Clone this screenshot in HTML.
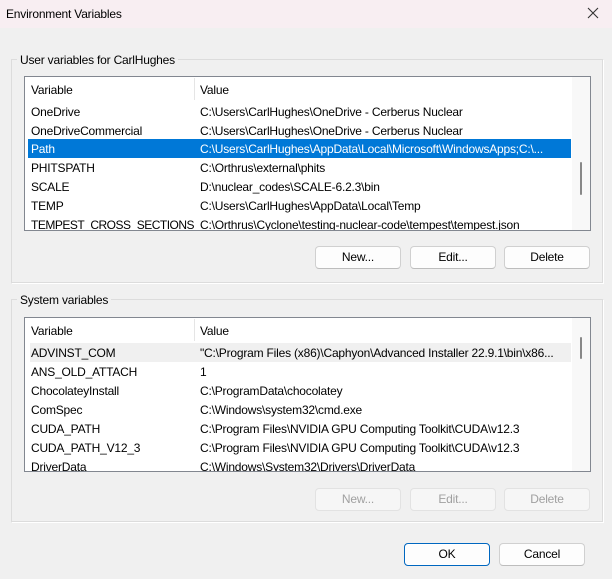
<!DOCTYPE html><html><head><style>
*{box-sizing:border-box;margin:0;padding:0}
body{width:612px;height:579px;background:#f0f0f0;font-family:"Liberation Sans",sans-serif;font-size:12px;letter-spacing:-0.2px;color:#000;position:relative;overflow:hidden}
.a{position:absolute;white-space:nowrap}
.title{left:0;top:0;width:612px;height:28px;background:#f8eef2}
.grp{border:1px solid #dcdcdc;border-right-color:#fff;border-bottom-color:#fff;box-shadow:inset -1px -1px 0 #dcdcdc}
.lbl{background:#f0f0f0;padding:0 3px}
.list{background:#fff;border:1px solid #828790;overflow:hidden}
.row{position:absolute;left:5px;height:19px;line-height:19px;width:541px}
.row span{position:absolute;top:1px}
.btn{position:absolute;height:23px;border:1px solid #d0d0d0;border-bottom-color:#bdbdbd;border-radius:4px;background:#fdfdfd;text-align:center;line-height:21px}
.dis{color:#a0a0a0;background:#f6f6f6;border-color:#e2e2e2}
.sb{position:absolute;right:0;top:0;width:18px;height:100%;background:#f8f8f8}
.th{position:absolute;left:8px;width:2px;background:#888;border-radius:1px}
</style></head><body>
<div class="a title"></div>
<div class="a" style="left:6px;top:7px">Environment Variables</div>
<svg class="a" style="left:587px;top:7px" width="12" height="12"><path d="M1 1L11 11M11 1L1 11" stroke="#333" stroke-width="1.1"/></svg>

<div class="a grp" style="left:11px;top:59px;width:593px;height:225px"></div>
<div class="a lbl" style="left:17px;top:53px">User variables for CarlHughes</div>
<div class="a list" style="left:24px;top:76px;width:567px;height:155px">
 <div class="a" style="left:169px;top:1px;width:1px;height:22px;background:#e5e5e5"></div>
 <div class="row" style="top:3px"><span style="left:1px">Variable</span><span style="left:170px">Value</span></div>
 <div class="row" style="top:25px"><span style="left:1px">OneDrive</span><span style="left:170px">C:\Users\CarlHughes\OneDrive - Cerberus Nuclear</span></div>
 <div class="row" style="top:44px"><span style="left:1px">OneDriveCommercial</span><span style="left:170px">C:\Users\CarlHughes\OneDrive - Cerberus Nuclear</span></div>
 <div class="row" style="top:62px;left:3px;background:#0078d7;color:#fff;width:543px"><span style="left:3px">Path</span><span style="left:172px">C:\Users\CarlHughes\AppData\Local\Microsoft\WindowsApps;C:\...</span></div>
 <div class="row" style="top:81px"><span style="left:1px">PHITSPATH</span><span style="left:170px">C:\Orthrus\external\phits</span></div>
 <div class="row" style="top:100px"><span style="left:1px">SCALE</span><span style="left:170px">D:\nuclear_codes\SCALE-6.2.3\bin</span></div>
 <div class="row" style="top:119px"><span style="left:1px">TEMP</span><span style="left:170px">C:\Users\CarlHughes\AppData\Local\Temp</span></div>
 <div class="row" style="top:138px"><span style="left:1px;letter-spacing:-0.5px">TEMPEST_CROSS_SECTIONS</span><span style="left:170px">C:\Orthrus\Cyclone\testing-nuclear-code\tempest\tempest.json</span></div>
 <div class="sb"><div class="th" style="top:85px;height:33px"></div></div>
</div>
<div class="btn" style="left:315px;top:246px;width:86px">New...</div>
<div class="btn" style="left:410px;top:246px;width:86px">Edit...</div>
<div class="btn" style="left:504px;top:246px;width:86px">Delete</div>

<div class="a grp" style="left:11px;top:299px;width:593px;height:224px"></div>
<div class="a lbl" style="left:17px;top:293px">System variables</div>
<div class="a list" style="left:24px;top:317px;width:567px;height:155px">
 <div class="a" style="left:169px;top:1px;width:1px;height:22px;background:#e5e5e5"></div>
 <div class="row" style="top:3px"><span style="left:1px">Variable</span><span style="left:170px">Value</span></div>
 <div class="row" style="top:25px;background:#f0f0f0"><span style="left:1px">ADVINST_COM</span><span style="left:170px">"C:\Program Files (x86)\Caphyon\Advanced Installer 22.9.1\bin\x86...</span></div>
 <div class="row" style="top:44px"><span style="left:1px">ANS_OLD_ATTACH</span><span style="left:170px">1</span></div>
 <div class="row" style="top:63px"><span style="left:1px">ChocolateyInstall</span><span style="left:170px">C:\ProgramData\chocolatey</span></div>
 <div class="row" style="top:82px"><span style="left:1px">ComSpec</span><span style="left:170px">C:\Windows\system32\cmd.exe</span></div>
 <div class="row" style="top:101px"><span style="left:1px">CUDA_PATH</span><span style="left:170px">C:\Program Files\NVIDIA GPU Computing Toolkit\CUDA\v12.3</span></div>
 <div class="row" style="top:120px"><span style="left:1px">CUDA_PATH_V12_3</span><span style="left:170px">C:\Program Files\NVIDIA GPU Computing Toolkit\CUDA\v12.3</span></div>
 <div class="row" style="top:139px"><span style="left:1px">DriverData</span><span style="left:170px">C:\Windows\System32\Drivers\DriverData</span></div>
 <div class="sb"><div class="th" style="top:19px;height:22px"></div></div>
</div>
<div class="btn dis" style="left:315px;top:488px;width:86px">New...</div>
<div class="btn dis" style="left:410px;top:488px;width:86px">Edit...</div>
<div class="btn dis" style="left:504px;top:488px;width:86px">Delete</div>

<div class="btn" style="left:404px;top:543px;width:86px;border:1px solid #0067c0;box-shadow:inset 0 0 0 1px #fff">OK</div>
<div class="btn" style="left:499px;top:543px;width:86px">Cancel</div>
</body></html>
